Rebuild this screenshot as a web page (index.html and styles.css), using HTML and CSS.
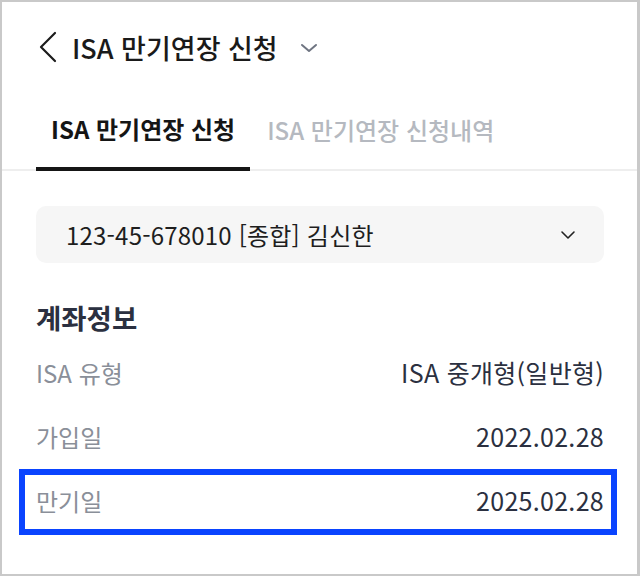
FILE: index.html
```html
<!DOCTYPE html>
<html lang="ko">
<head>
<meta charset="utf-8">
<link rel="stylesheet" href="styles.css">
</head>
<body>
<div class="frame">
  <header class="header">
    <svg class="back" width="20" height="32" viewBox="0 0 20 32"><path d="M17 2 L3 16 L17 30" fill="none" stroke="#1c1c1c" stroke-width="2.2" stroke-linecap="round" stroke-linejoin="round"/></svg>
    <h1 class="title">ISA 만기연장 신청</h1>
    <svg class="title-caret" width="18" height="10" viewBox="0 0 18 10"><path d="M2 2 L9 8 L16 2" fill="none" stroke="#6f7582" stroke-width="2" stroke-linecap="round" stroke-linejoin="round"/></svg>
  </header>
  <nav class="tabs">
    <div class="tab tab-active">ISA 만기연장 신청</div>
    <div class="tab">ISA 만기연장 신청내역</div>
  </nav>
  <main class="content">
    <div class="select">
      <span class="select-text">123-45-678010 [종합] 김신한</span>
      <svg class="select-caret" width="16" height="10" viewBox="0 0 16 10"><path d="M2 2 L8 8 L14 2" fill="none" stroke="#222" stroke-width="1.6" stroke-linecap="round" stroke-linejoin="round"/></svg>
    </div>
    <h2 class="section-title">계좌정보</h2>
    <dl class="info">
      <div class="row"><dt>ISA 유형</dt><dd>ISA 중개형(일반형)</dd></div>
      <div class="row"><dt>가입일</dt><dd>2022.02.28</dd></div>
      <div class="row"><dt>만기일</dt><dd>2025.02.28</dd></div>
    </dl>
  </main>
  <div class="highlight"></div>
</div>
</body>
</html>
```
FILE: styles.css
```css
* { box-sizing: border-box; }
html, body { margin: 0; padding: 0; background: #fff; }
body { font-family: "Noto Sans CJK KR", "Noto Sans", sans-serif; }
.frame {
  position: relative;
  width: 640px;
  height: 576px;
  border-style: solid;
  border-color: #c9c9c9;
  border-width: 2px 3px 2px 2px;
  overflow: hidden;
}
.header {
  height: 90px;
  display: flex;
  align-items: center;
  padding-left: 36px;
}
.back { display: block; margin-right: 14px; }
.title {
  margin: 0;
  font-size: 27px;
  font-weight: 500;
  color: #1a1a1a;
}
.title-caret { display: block; margin-left: 22px; margin-top: 2px; }
.tabs {
  height: 79px;
  display: flex;
  gap: 2px;
  padding-left: 34px;
  border-bottom: 2px solid #eeeeee;
}
.tab {
  display: flex;
  align-items: center;
  padding: 0 15px 3px;
  font-size: 24px;
  font-weight: 500;
  color: #b5b9c0;
}
.tab-active {
  color: #151515;
  font-weight: 700;
  border-bottom: 4px solid #151515;
  margin-bottom: -2px;
}
.content { padding: 35px 33px 0 34px; }
.select {
  height: 57px;
  border-radius: 10px;
  background: #f6f6f6;
  display: flex;
  align-items: center;
  justify-content: space-between;
  padding: 0 28px 0 30px;
}
.select-text { font-size: 24px; color: #1e1e1e; letter-spacing: 0.2px; }
.select-caret { display: block; }
.section-title {
  margin: 36px 0 0;
  font-size: 27.5px;
  font-weight: 700;
  color: #2b3040;
  line-height: 36px;
}
.info { margin: 5px 0 0; }
.row {
  height: 64px;
  display: flex;
  align-items: center;
  justify-content: space-between;
  font-size: 24px;
}
.row dt { color: #8a8f99; }
.row dd { margin: 0; color: #2b3040; font-size: 25px; letter-spacing: 0.3px; }
.highlight {
  position: absolute;
  left: 17px;
  top: 467px;
  width: 598px;
  height: 66px;
  border: 6px solid #0a44ff;
}
```
